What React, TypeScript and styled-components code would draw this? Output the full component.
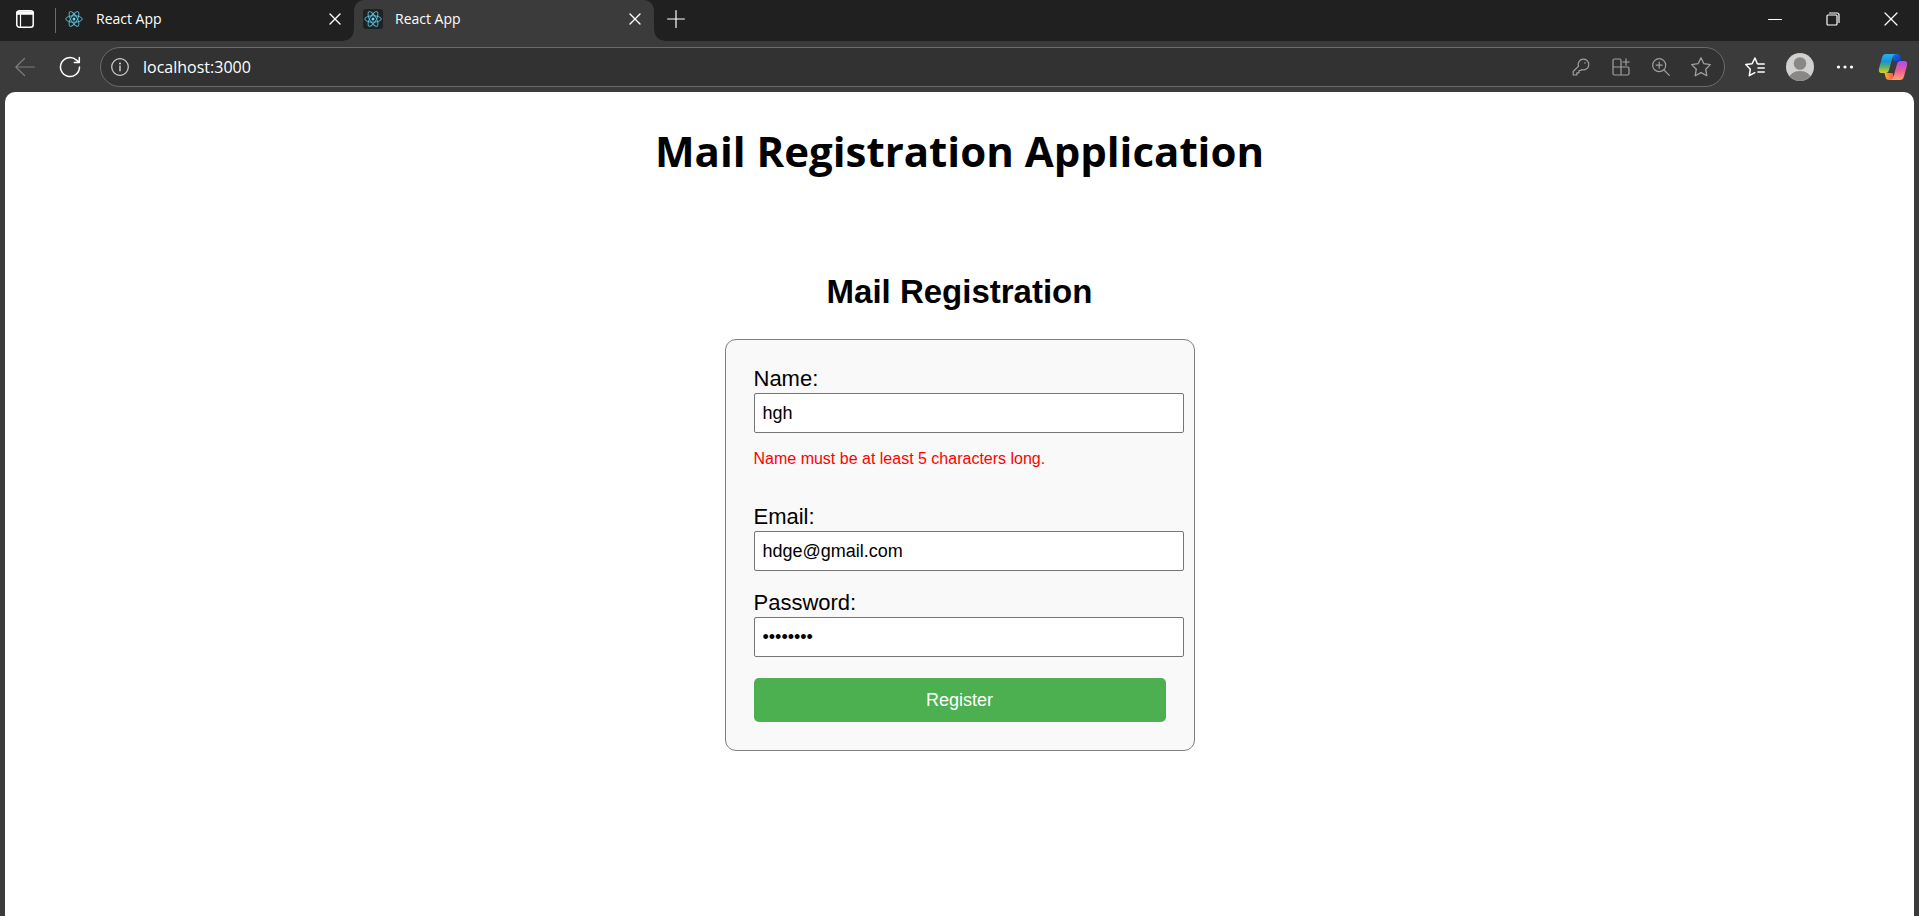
import React, { useState } from "react";
import styled, { createGlobalStyle } from "styled-components";

const GlobalStyle = createGlobalStyle`
  body {
    margin: 0;
    background: #3b3b3b;
  }
`;

const uiFont = '"Segoe UI", "Open Sans", "Noto Sans", sans-serif';
const formFont = 'Arial, "Liberation Sans", sans-serif';

const Window = styled.div`
  display: flex;
  flex-direction: column;
  min-height: 100vh;
  background: #3b3b3b;
  font-family: ${uiFont};
`;

const TabStrip = styled.header`
  display: flex;
  height: 41px;
  background: #202020;
  color: #fff;
`;

const IconButton = styled.button<{ $width?: number; $color?: string }>`
  display: flex;
  flex: none;
  align-items: center;
  justify-content: center;
  width: ${(p) => p.$width ?? 40}px;
  height: 38px;
  padding: 0;
  border: 0;
  background: none;
  color: ${(p) => p.$color ?? "#fff"};
`;

const Divider = styled.div`
  width: 1px;
  height: 25px;
  margin: 8px 0 0 5px;
  background: #6c6c6c;
`;

const Tab = styled.div<{ $active?: boolean }>`
  position: relative;
  display: flex;
  flex: none;
  align-items: center;
  box-sizing: border-box;
  width: ${(p) => (p.$active ? 300 : 298)}px;
  padding: 0 0 3px ${(p) => (p.$active ? 9 : 8)}px;
  border-radius: 10px 10px 0 0;
  background: ${(p) => (p.$active ? "#3b3b3b" : "transparent")};

  &::before,
  &::after {
    content: "";
    display: ${(p) => (p.$active ? "block" : "none")};
    position: absolute;
    bottom: 0;
    width: 10px;
    height: 10px;
  }
  &::before {
    right: 100%;
    background: radial-gradient(circle at 0 0, transparent 9px, #3b3b3b 10px);
  }
  &::after {
    left: 100%;
    background: radial-gradient(circle at 100% 0, transparent 9px, #3b3b3b 10px);
  }
`;

const Favicon = styled.span<{ $dark?: boolean }>`
  display: flex;
  align-items: center;
  justify-content: center;
  width: 20px;
  height: 20px;
  border-radius: 3px;
  background: ${(p) => (p.$dark ? "#202124" : "transparent")};
`;

const TabTitle = styled.span`
  flex: 1;
  margin-left: 12px;
  font-size: 14px;
  line-height: 20px;
`;

const WindowControls = styled.div`
  display: flex;
  margin-left: auto;
`;

const Toolbar = styled.nav`
  display: flex;
  align-items: center;
  height: 51px;
`;

const AddressBar = styled.div`
  display: flex;
  flex: 1;
  align-items: center;
  box-sizing: border-box;
  height: 40px;
  margin-left: 10px;
  padding-right: 3px;
  border: 1px solid #6b6b6b;
  border-radius: 20px;
  background: #323232;
`;

const Address = styled.input`
  flex: 1;
  min-width: 0;
  padding: 0;
  margin-left: 4px;
  border: 0;
  outline: 0;
  background: none;
  color: #fff;
  font: 16px/24px ${uiFont};
`;

const Actions = styled.div`
  display: flex;
  margin-left: 7px;
`;

const Page = styled.main`
  display: flex;
  flex: 1;
  flex-direction: column;
  align-items: center;
  margin: 0 5px;
  border-radius: 10px 10px 0 0;
  background: #fff;
  color: #000;
`;

const PageTitle = styled.h1`
  margin: 30px 0 0;
  font-size: 42px;
  line-height: 58px;
  font-weight: 700;
`;

const FormTitle = styled.h2`
  margin: 93px 0 28px;
  font: 700 33px/38px ${formFont};
`;

const Form = styled.form`
  box-sizing: border-box;
  width: 470px;
  padding: 28px;
  border: 1px solid #808080;
  border-radius: 11px;
  background: #f9f9f9;
  font-family: ${formFont};
`;

const Field = styled.div`
  margin-bottom: 21px;
`;

const Label = styled.label`
  display: block;
  margin-bottom: 3px;
  font-size: 22px;
  line-height: 22px;
`;

const TextInput = styled.input`
  display: block;
  box-sizing: content-box;
  width: 100%;
  height: 22px;
  padding: 8px;
  border: 1px solid #767676;
  border-radius: 2px;
  background: #fff;
  color: #000;
  font: 18px ${formFont};
`;

const ErrorText = styled.p`
  margin: 17px 0 38px;
  color: #f00;
  font-size: 16px;
  line-height: 18px;
`;

const SubmitButton = styled.button`
  display: block;
  width: 100%;
  height: 44px;
  border: 0;
  border-radius: 5px;
  background: #4caf50;
  color: #fff;
  font: 18px ${formFont};
`;

type IconProps = { size: number; children: React.ReactNode; stroke?: number };

const Icon = ({ size, children, stroke = 1.2 }: IconProps) => (
  <svg
    width={size}
    height={size}
    viewBox={`0 0 ${size} ${size}`}
    fill="none"
    stroke="currentColor"
    strokeWidth={stroke}
    strokeLinecap="round"
    strokeLinejoin="round"
    aria-hidden="true"
  >
    {children}
  </svg>
);

const ReactLogo = () => (
  <svg width="18" height="18" viewBox="-12 -12 24 24" fill="none" stroke="#58c4dc" strokeWidth="1.2" aria-hidden="true">
    <circle r="2" fill="#61dafb" stroke="none" />
    <ellipse rx="11" ry="4.3" />
    <ellipse rx="11" ry="4.3" transform="rotate(60)" />
    <ellipse rx="11" ry="4.3" transform="rotate(120)" />
  </svg>
);

const CloseIcon = () => (
  <Icon size={12} stroke={1.4}>
    <path d="M1 1l10 10M11 1L1 11" />
  </Icon>
);

const TabMenuIcon = () => (
  <Icon size={20} stroke={1.5}>
    <rect x="1.8" y="1.8" width="16.4" height="16.4" rx="2.5" />
    <path d="M2 4h16M2 3h16M2 5h16" strokeWidth="1.6" />
    <path d="M5.5 5.5v12.5" strokeWidth="1.2" />
  </Icon>
);

const CopilotLogo = () => (
  <svg width="30" height="28" viewBox="0 0 30 28" aria-hidden="true">
    <defs>
      <linearGradient id="cpLeft" x1="0" y1="0" x2="0" y2="1">
        <stop offset="0" stopColor="#22b4ee" />
        <stop offset=".4" stopColor="#1b92d8" />
        <stop offset=".7" stopColor="#5fb560" />
        <stop offset="1" stopColor="#e8cf18" />
      </linearGradient>
      <linearGradient id="cpRight" x1="0" y1="0" x2="0" y2="1">
        <stop offset="0" stopColor="#a94fe8" />
        <stop offset=".5" stopColor="#ea5c9c" />
        <stop offset="1" stopColor="#ffa367" />
      </linearGradient>
      <linearGradient id="cpTop" x1="0" y1="0" x2="1" y2="1">
        <stop offset="0" stopColor="#1a78e0" />
        <stop offset="1" stopColor="#1236b8" />
      </linearGradient>
      <linearGradient id="cpBottom" x1="0" y1="0" x2="1" y2="0">
        <stop offset="0" stopColor="#f9b32a" />
        <stop offset="1" stopColor="#ee4b50" />
      </linearGradient>
    </defs>
    <path d="M13 1h6c2 0 3 1 3.500 3l1 4h-8z" fill="url(#cpTop)" />
    <path d="M17 27h-6c-2 0-3-1-3.500-3l-1-4h8z" fill="url(#cpBottom)" />
    <path d="M8 1h11c-3 0-4 1.500-4.700 4L11 17c-.6 2-1.500 3-3.500 3H4c-3 0-3.500-2-3-4.500L4 4.500C4.700 2 6 1 8 1z" fill="url(#cpLeft)" />
    <path d="M22 27H11c3 0 4-1.500 4.700-4L19 11c.6-2 1.500-3 3.500-3H26c3 0 3.500 2 3 4.500l-3 11c-.7 2.500-2 3.500-4 3.500z" fill="url(#cpRight)" />
  </svg>
);

const BrowserTab = ({ active }: { active?: boolean }) => (
  <Tab $active={active}>
    <Favicon $dark={active}>
      <ReactLogo />
    </Favicon>
    <TabTitle>React App</TabTitle>
    <IconButton $width={38} aria-label="Close tab">
      <CloseIcon />
    </IconButton>
  </Tab>
);

const BrowserTabs = () => (
  <TabStrip>
    <IconButton $width={50} aria-label="Tab actions">
      <TabMenuIcon />
    </IconButton>
    <Divider />
    <BrowserTab />
    <BrowserTab active />
    <IconButton $width={44} aria-label="New tab">
      <Icon size={18}>
        <path d="M9 .6v16.8M.6 9h16.8" />
      </Icon>
    </IconButton>
    <WindowControls>
      <IconButton $width={58} aria-label="Minimize">
        <Icon size={14}>
          <path d="M.6 7.500h12.800" />
        </Icon>
      </IconButton>
      <IconButton $width={58} aria-label="Restore">
        <Icon size={14}>
          <rect x="1" y="3" width="10" height="10" rx="1" />
          <path d="M3.500 1h7.500a2 2 0 0 1 2 2v7.500" />
        </Icon>
      </IconButton>
      <IconButton $width={57} aria-label="Close window">
        <Icon size={14}>
          <path d="M1 1l12 12M13 1L1 13" />
        </Icon>
      </IconButton>
    </WindowControls>
  </TabStrip>
);

const BrowserToolbar = () => (
  <Toolbar>
    <IconButton $width={50} $color="#7c7c7c" aria-label="Back">
      <Icon size={20}>
        <path d="M19.4 10H.8M9.5 1.500L.8 10l8.700 8.500" />
      </Icon>
    </IconButton>
    <IconButton aria-label="Refresh">
      <Icon size={22} stroke={1.5}>
        <path d="M20.500 11a9.500 9.500 0 1 1-3-6.900l2.500 2.200M20.300 1.500v5h-5" />
      </Icon>
    </IconButton>
    <AddressBar>
      <IconButton $width={38} $color="#d0d0d0" aria-label="Site information">
        <Icon size={18}>
          <circle cx="9" cy="9" r="8.3" />
          <path d="M9 8v4.800" strokeWidth="1.4" />
          <circle cx="9" cy="5.5" r=".5" fill="currentColor" />
        </Icon>
      </IconButton>
      <Address aria-label="Address" defaultValue="localhost:3000" />
      <IconButton $color="#a0a0a0" aria-label="Saved passwords">
        <Icon size={18}>
          <path d="M11.500 1.200a5.300 5.300 0 0 0-5 7L1.200 13.500V17h3.600v-2.200H7v-2.300h1.800l1-1a5.300 5.300 0 1 0 1.700-10.300z" />
          <circle cx="13" cy="5" r=".8" fill="currentColor" stroke="none" />
        </Icon>
      </IconButton>
      <IconButton $color="#a0a0a0" aria-label="Apps">
        <Icon size={18}>
          <path d="M9 9V2.500A1.500 1.500 0 0 0 7.500 1h-5A1.500 1.500 0 0 0 1 2.500v13A1.500 1.500 0 0 0 2.500 17h13a1.500 1.500 0 0 0 1.500-1.500v-5A1.500 1.500 0 0 0 15.500 9H1M9 9v8M14 .8v6.400M10.800 4h6.400" />
        </Icon>
      </IconButton>
      <IconButton $color="#a0a0a0" aria-label="Zoom">
        <Icon size={18}>
          <circle cx="7.2" cy="7.2" r="6.5" />
          <path d="M12 12l5.300 5.300M7.200 4.200v6M4.200 7.200h6" />
        </Icon>
      </IconButton>
      <IconButton $color="#a0a0a0" aria-label="Add to favorites">
        <Icon size={20} stroke={1.3}>
          <path d="M10 .8l2.900 5.900 6.400.9-4.600 4.600 1.100 6.500L10 15.600l-5.800 3.100 1.100-6.500L.7 7.600l6.400-.9z" />
        </Icon>
      </IconButton>
    </AddressBar>
    <Actions>
      <IconButton $width={45} aria-label="Favorites">
        <Icon size={20} stroke={1.5}>
          <path d="M12.300 6.700L10 1 7.100 6.700.8 7.600l4.500 4.600-1 6.500 5.500-3M13 7h6.300M13 11h6.300M13 15h6.300" />
        </Icon>
      </IconButton>
      <IconButton $width={45} aria-label="Profile">
        <svg width="28" height="28" viewBox="0 0 28 28" aria-hidden="true">
          <clipPath id="avatar">
            <circle cx="14" cy="14" r="14" />
          </clipPath>
          <g clipPath="url(#avatar)">
            <rect width="28" height="28" fill="#d2d0ce" />
            <circle cx="14" cy="10.5" r="6.3" fill="#8a8886" />
            <ellipse cx="14" cy="26" rx="11" ry="8" fill="#8a8886" />
          </g>
        </svg>
      </IconButton>
      <IconButton $width={45} aria-label="Settings and more">
        <svg width="18" height="6" viewBox="0 0 18 6" fill="currentColor" aria-hidden="true">
          <circle cx="2.5" cy="3" r="1.6" />
          <circle cx="9" cy="3" r="1.6" />
          <circle cx="15.5" cy="3" r="1.6" />
        </svg>
      </IconButton>
      <IconButton $width={52} aria-label="Copilot">
        <CopilotLogo />
      </IconButton>
    </Actions>
  </Toolbar>
);

export default function App() {
  const [name, setName] = useState("hgh");
  const [email, setEmail] = useState("hdge@gmail.com");
  const [password, setPassword] = useState("abcd1234");

  return (
    <Window>
      <GlobalStyle />
      <BrowserTabs />
      <BrowserToolbar />
      <Page>
        <PageTitle>Mail Registration Application</PageTitle>
        <FormTitle>Mail Registration</FormTitle>
        <Form noValidate onSubmit={(e) => e.preventDefault()}>
          <Field>
            <Label htmlFor="name">Name:</Label>
            <TextInput id="name" value={name} onChange={(e) => setName(e.target.value)} />
            {name.length < 5 && <ErrorText>Name must be at least 5 characters long.</ErrorText>}
          </Field>
          <Field>
            <Label htmlFor="email">Email:</Label>
            <TextInput id="email" type="email" value={email} onChange={(e) => setEmail(e.target.value)} />
          </Field>
          <Field>
            <Label htmlFor="password">Password:</Label>
            <TextInput
              id="password"
              type="password"
              value={password}
              onChange={(e) => setPassword(e.target.value)}
            />
          </Field>
          <SubmitButton type="submit">Register</SubmitButton>
        </Form>
      </Page>
    </Window>
  );
}
